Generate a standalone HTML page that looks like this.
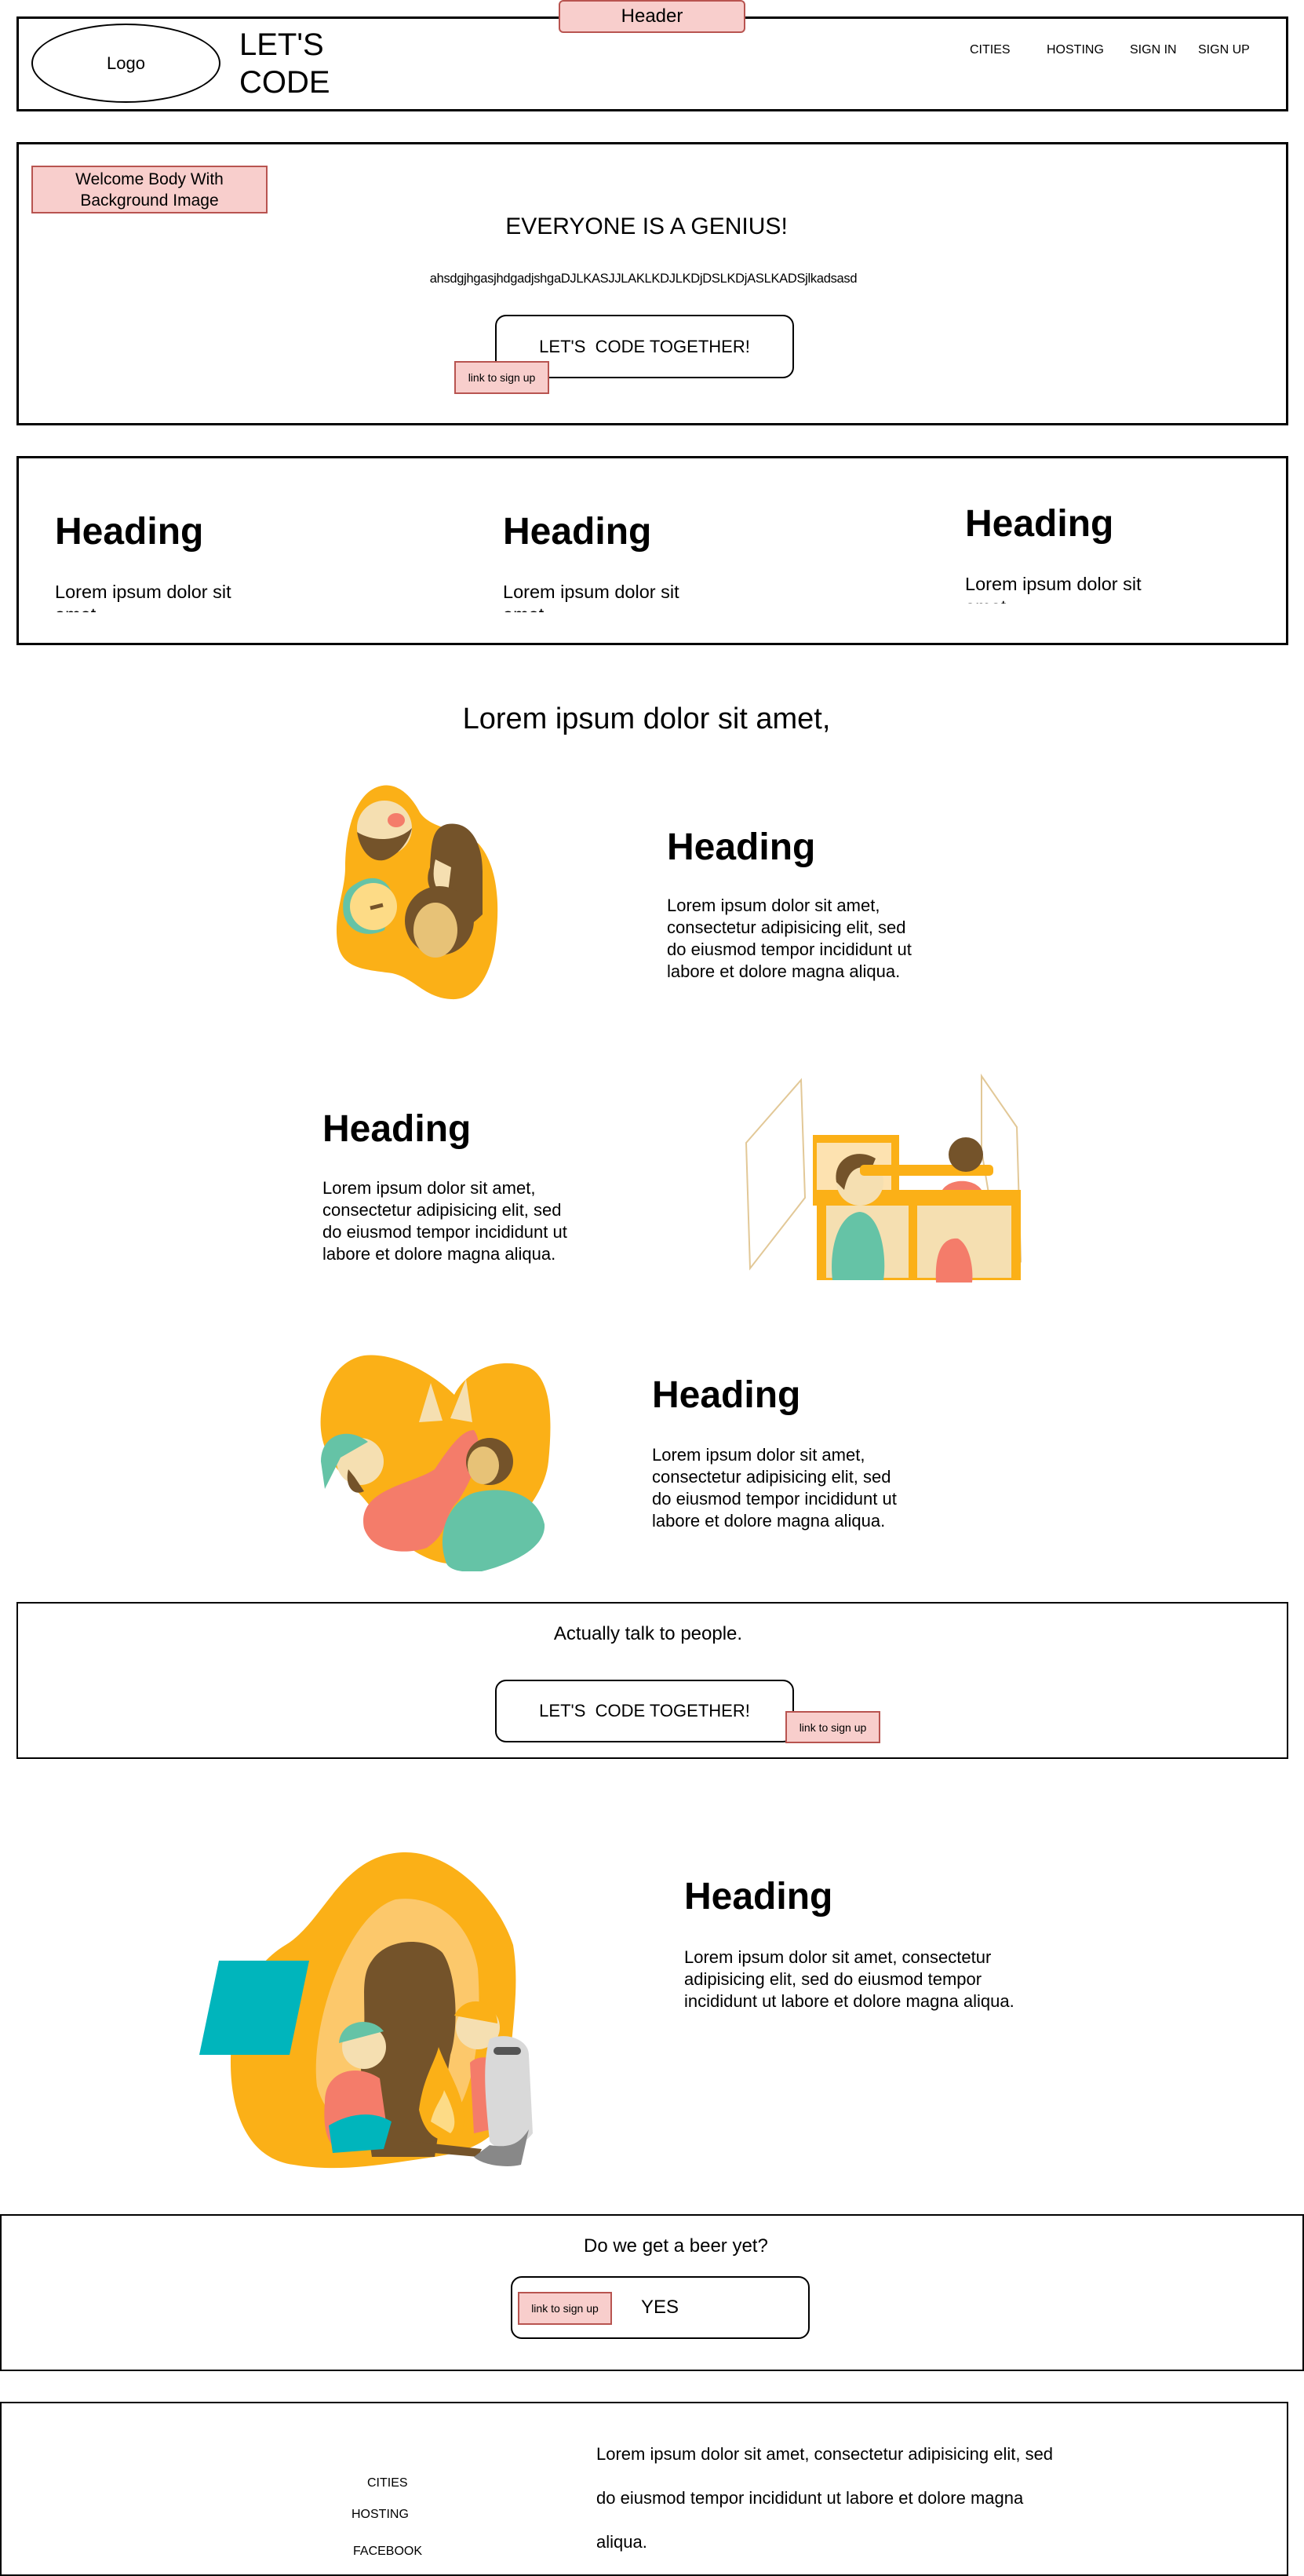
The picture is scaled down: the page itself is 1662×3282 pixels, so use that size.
<!DOCTYPE html>
<html><head><meta charset="utf-8">
<style>
*{margin:0;padding:0;box-sizing:border-box}
body{width:1662px;height:3282px;position:relative;background:#fff;font-family:"Liberation Sans",Arial,sans-serif;color:#000;overflow:hidden}
.a{position:absolute}
.box{position:absolute;border:3px solid #000}
.pink{position:absolute;background:#f8cecc;border:2px solid #b85450;display:flex;align-items:center;justify-content:center;text-align:center}
.btn{position:absolute;border:2px solid #000;border-radius:14px;display:flex;align-items:center;justify-content:center}
.t{position:absolute;white-space:nowrap}
h2{position:absolute;font-size:48px;font-weight:bold;line-height:56px;white-space:nowrap}
.p{position:absolute;font-size:22px;line-height:28px}
</style></head><body>

<!-- Header -->
<div class="box" style="left:21px;top:21px;width:1621px;height:121px"></div>
<div class="pink" style="left:712px;top:0;width:238px;height:42px;border-radius:6px;font-size:24px">Header</div>
<div class="a" style="left:40px;top:30px;width:241px;height:101px;border:2px solid #000;border-radius:50%;display:flex;align-items:center;justify-content:center;font-size:22px">Logo</div>
<div class="t" style="left:305px;top:33px;font-size:40px;line-height:48px">LET'S<br>CODE</div>
<div class="t" style="left:1236px;top:54px;font-size:16px;line-height:20px">CITIES</div>
<div class="t" style="left:1334px;top:54px;font-size:16px;line-height:20px">HOSTING</div>
<div class="t" style="left:1440px;top:54px;font-size:16px;line-height:20px">SIGN IN</div>
<div class="t" style="left:1527px;top:54px;font-size:16px;line-height:20px">SIGN UP</div>

<!-- Welcome -->
<div class="box" style="left:21px;top:181px;width:1621px;height:361px"></div>
<div class="pink" style="left:40px;top:211px;width:301px;height:61px;font-size:21px;line-height:27px">Welcome Body With<br>Background Image</div>
<div class="t" style="left:0;width:1662px;text-align:center;top:270px;font-size:30px;line-height:38px;padding-right:14px">EVERYONE IS A GENIUS!</div>
<div class="t" style="left:520px;width:600px;text-align:center;top:344px;font-size:16.5px;line-height:22px;letter-spacing:-0.3px">ahsdgjhgasjhdgadjshgaDJLKASJJLAKLKDJLKDjDSLKDjASLKADSjlkadsasd</div>
<div class="btn" style="left:631px;top:401px;width:381px;height:81px;font-size:22px">LET'S&nbsp; CODE TOGETHER!</div>
<div class="pink" style="left:579px;top:460px;width:121px;height:42px;font-size:14px">link to sign up</div>

<!-- Features -->
<div class="box" style="left:21px;top:581px;width:1621px;height:241px"></div>
<h2 style="left:70px;top:650px">Heading</h2>
<h2 style="left:641px;top:650px">Heading</h2>
<h2 style="left:1230px;top:640px">Heading</h2>
<div class="a" style="left:70px;top:740px;width:260px;height:40px;overflow:hidden;font-size:23.5px;line-height:29px">Lorem ipsum dolor sit amet</div>
<div class="a" style="left:641px;top:740px;width:260px;height:40px;overflow:hidden;font-size:23.5px;line-height:29px">Lorem ipsum dolor sit amet</div>
<div class="a" style="left:1230px;top:730px;width:260px;height:39px;overflow:hidden;font-size:23.5px;line-height:29px">Lorem ipsum dolor sit amet</div>

<div class="t" style="left:0;width:1662px;text-align:center;top:893px;font-size:38px;line-height:46px;padding-right:14px">Lorem ipsum dolor sit amet,</div>

<!-- Section 1 -->
<svg class="a" style="left:410px;top:995px" width="280" height="285" viewBox="0 0 280 285">
<path d="M70 8 C95 -2 115 20 125 40 C140 62 175 60 200 80 C222 105 228 150 222 200 C218 240 200 280 165 278 C130 276 120 252 90 245 C55 240 25 240 20 205 C15 170 30 140 30 110 C30 70 40 20 70 8Z" fill="#fbb017"/>
<circle cx="80" cy="60" r="35" fill="#f5dfb1"/><path d="M45 65 C50 95 70 110 90 96 C100 90 112 75 115 60 C100 75 70 80 45 65Z" fill="#74532a"/>
<ellipse cx="95" cy="50" rx="11" ry="9" fill="#f47c6a"/>
<path d="M160 55 C190 50 205 80 205 115 L205 170 C190 185 172 195 165 192 L160 150 C140 150 130 130 138 110 C140 80 140 60 160 55Z" fill="#74532a"/><path d="M145 100 C140 120 142 140 160 150 L165 110Z" fill="#f5dfb1"/>
<path d="M45 130 C70 115 90 130 90 150 L80 190 C60 200 35 195 28 170 C25 150 30 138 45 130Z" fill="#65c3a6"/><circle cx="66" cy="160" r="30" fill="#fddb86"/><path d="M62 162 L78 158" stroke="#74532a" stroke-width="5"/>
<circle cx="150" cy="178" r="44" fill="#74532a"/><ellipse cx="145" cy="190" rx="28" ry="35" fill="#e7c277"/>
</svg>
<h2 style="left:850px;top:1052px">Heading</h2>
<div class="p" style="left:850px;top:1140px;width:380px">Lorem ipsum dolor sit amet,<br>consectetur adipisicing elit, sed<br>do eiusmod tempor incididunt ut<br>labore et dolore magna aliqua.</div>

<!-- Section 2 -->
<h2 style="left:411px;top:1411px">Heading</h2>
<div class="p" style="left:411px;top:1500px;width:380px">Lorem ipsum dolor sit amet,<br>consectetur adipisicing elit, sed<br>do eiusmod tempor incididunt ut<br>labore et dolore magna aliqua.</div>
<svg class="a" style="left:941px;top:1366px" width="400" height="275" viewBox="0 0 400 275">
<path d="M10 90 L80 10 L85 160 L15 250 Z" fill="none" stroke="#e2c897" stroke-width="2"/>
<path d="M310 5 L355 70 L360 240 L325 190 L310 100Z" fill="none" stroke="#e2c897" stroke-width="2"/>
<rect x="95" y="80" width="110" height="90" fill="#fbb017"/><rect x="100" y="90" width="95" height="70" fill="#fde2b0"/>
<rect x="100" y="150" width="260" height="115" fill="#fbb017"/>
<rect x="112" y="170" width="105" height="92" fill="#f5dfb1"/><rect x="228" y="170" width="120" height="92" fill="#f5dfb1"/>
<path d="M120 265 C115 220 130 180 155 178 C180 180 190 230 185 265Z" fill="#65c3a6"/>
<circle cx="155" cy="140" r="30" fill="#f5dfb1"/><path d="M125 140 C120 110 150 95 175 110 L170 122 C150 118 140 125 135 150Z" fill="#74532a"/>
<rect x="155" y="118" width="170" height="14" rx="5" fill="#fbb017"/>
<circle cx="290" cy="105" r="22" fill="#74532a"/><path d="M260 150 C270 135 300 135 310 150Z" fill="#f47c6a"/>
<path d="M252 268 C250 230 260 210 280 212 C295 220 300 250 298 268Z" fill="#f47c6a"/>
</svg>

<!-- Section 3 -->
<svg class="a" style="left:404px;top:1722px" width="315" height="280" viewBox="0 0 315 280">
<path d="M60 5 C100 0 150 30 175 55 C190 25 230 5 270 20 C300 35 300 90 295 140 C290 190 240 235 200 262 C170 285 110 260 70 200 C40 160 0 140 5 80 C8 40 30 10 60 5Z" fill="#fbb017"/>
<path d="M60 225 C50 175 120 170 150 150 C170 120 185 100 200 100 C215 120 200 160 180 190 C160 210 170 230 140 250 C110 260 70 255 60 225Z" fill="#f47c6a"/>
<path d="M165 270 C150 230 170 190 200 180 C240 170 280 180 290 220 C292 250 250 270 210 280 C190 282 170 280 165 270Z" fill="#65c3a6"/>
<circle cx="220" cy="140" r="30" fill="#74532a"/><ellipse cx="212" cy="145" rx="20" ry="24" fill="#e7c277"/>
<circle cx="55" cy="140" r="30" fill="#f5dfb1"/><path d="M5 140 C5 105 40 95 65 115 L30 135 L10 175Z" fill="#65c3a6"/><path d="M40 150 C35 170 45 185 60 178 L48 160Z" fill="#74532a"/>
<path d="M130 90 L145 40 L160 88Z M170 85 L190 35 L198 90Z" fill="#f5dfb1"/>
</svg>
<h2 style="left:831px;top:1750px">Heading</h2>
<div class="p" style="left:831px;top:1840px;width:380px">Lorem ipsum dolor sit amet,<br>consectetur adipisicing elit, sed<br>do eiusmod tempor incididunt ut<br>labore et dolore magna aliqua.</div>

<!-- CTA -->
<div class="box" style="left:21px;top:2041px;width:1621px;height:200px;border-width:2px"></div>
<div class="t" style="left:0;width:1662px;text-align:center;top:2068px;font-size:24px;line-height:28px;padding-right:10px">Actually talk to people.</div>
<div class="btn" style="left:631px;top:2140px;width:381px;height:80px;font-size:22px">LET'S&nbsp; CODE TOGETHER!</div>
<div class="pink" style="left:1001px;top:2180px;width:121px;height:41px;font-size:14px">link to sign up</div>

<!-- Section 4 -->
<svg class="a" style="left:254px;top:2358px" width="455" height="420" viewBox="0 0 455 420">
<path d="M260 2 C320 0 380 60 400 120 C410 180 395 240 395 300 C395 360 360 380 300 390 C230 400 180 410 120 400 C60 392 40 330 40 270 C40 210 60 150 110 120 C160 90 180 5 260 2Z" fill="#fbb017"/>
<path d="M250 62 C300 55 345 90 355 150 C360 220 355 330 300 360 C240 380 170 370 150 300 C140 220 190 80 250 62Z" fill="#fcc86b"/>
<path d="M220 140 C240 110 290 110 310 130 C330 160 330 230 320 260 L300 390 L220 390 C210 320 200 270 210 230 C212 190 205 160 220 140Z" fill="#74532a"/>
<path d="M0 260 L25 140 L140 140 L115 260Z" fill="#00b5bc"/>
<circle cx="210" cy="250" r="28" fill="#f5dfb1"/><path d="M178 245 C180 215 220 210 235 230Z" fill="#65c3a6"/>
<path d="M160 320 C160 280 200 270 230 290 L240 360 L175 380 C160 370 158 345 160 320Z" fill="#f47c6a"/><path d="M165 350 C190 335 220 330 245 345 L235 380 L170 385Z" fill="#00b5bc"/>
<circle cx="355" cy="225" r="28" fill="#f5dfb1"/><path d="M325 210 C340 180 380 190 380 220Z" fill="#fbb017"/>
<path d="M345 270 C360 255 395 265 395 300 L395 350 L350 360Z" fill="#f47c6a"/>
<path d="M280 330 C285 290 300 270 305 250 C320 290 345 320 335 360 C320 375 290 375 280 330Z" fill="#fbb017"/><path d="M295 345 C300 325 310 315 312 305 C325 330 330 350 320 360Z" fill="#fddb86"/>
<path d="M270 370 L360 380 L355 390 L265 382Z" fill="#74532a"/>
<path d="M370 240 C390 230 420 240 420 260 L425 360 C410 380 380 385 370 370 C365 320 360 270 370 240Z" fill="#d9d9d9"/><rect x="375" y="250" width="35" height="10" rx="5" fill="#555"/>
<path d="M370 375 C400 380 410 370 420 355 L410 400 C390 405 360 400 350 390Z" fill="#888"/>
</svg>
<h2 style="left:872px;top:2389px">Heading</h2>
<div class="p" style="left:872px;top:2480px;width:540px">Lorem ipsum dolor sit amet, consectetur<br>adipisicing elit, sed do eiusmod tempor<br>incididunt ut labore et dolore magna aliqua.</div>

<!-- Beer -->
<div class="box" style="left:0;top:2821px;width:1662px;height:200px;border-width:2px"></div>
<div class="t" style="left:744px;top:2848px;font-size:24px;line-height:28px">Do we get a beer yet?</div>
<div class="btn" style="left:651px;top:2900px;width:381px;height:80px"></div>
<div class="t" style="left:817px;top:2926px;font-size:24px;line-height:28px">YES</div>
<div class="pink" style="left:660px;top:2920px;width:120px;height:42px;font-size:14px">link to sign up</div>

<!-- Footer -->
<div class="box" style="left:0;top:3060px;width:1642px;height:222px;border-width:2px"></div>
<div class="t" style="left:468px;top:3154px;font-size:16px;line-height:20px">CITIES</div>
<div class="t" style="left:448px;top:3194px;font-size:16px;line-height:20px">HOSTING</div>
<div class="t" style="left:450px;top:3241px;font-size:16px;line-height:20px">FACEBOOK</div>
<div class="a" style="left:760px;top:3099px;width:600px;font-size:22px;line-height:56px">Lorem ipsum dolor sit amet, consectetur adipisicing elit, sed<br>do eiusmod tempor incididunt ut labore et dolore magna<br>aliqua.</div>

</body></html>
